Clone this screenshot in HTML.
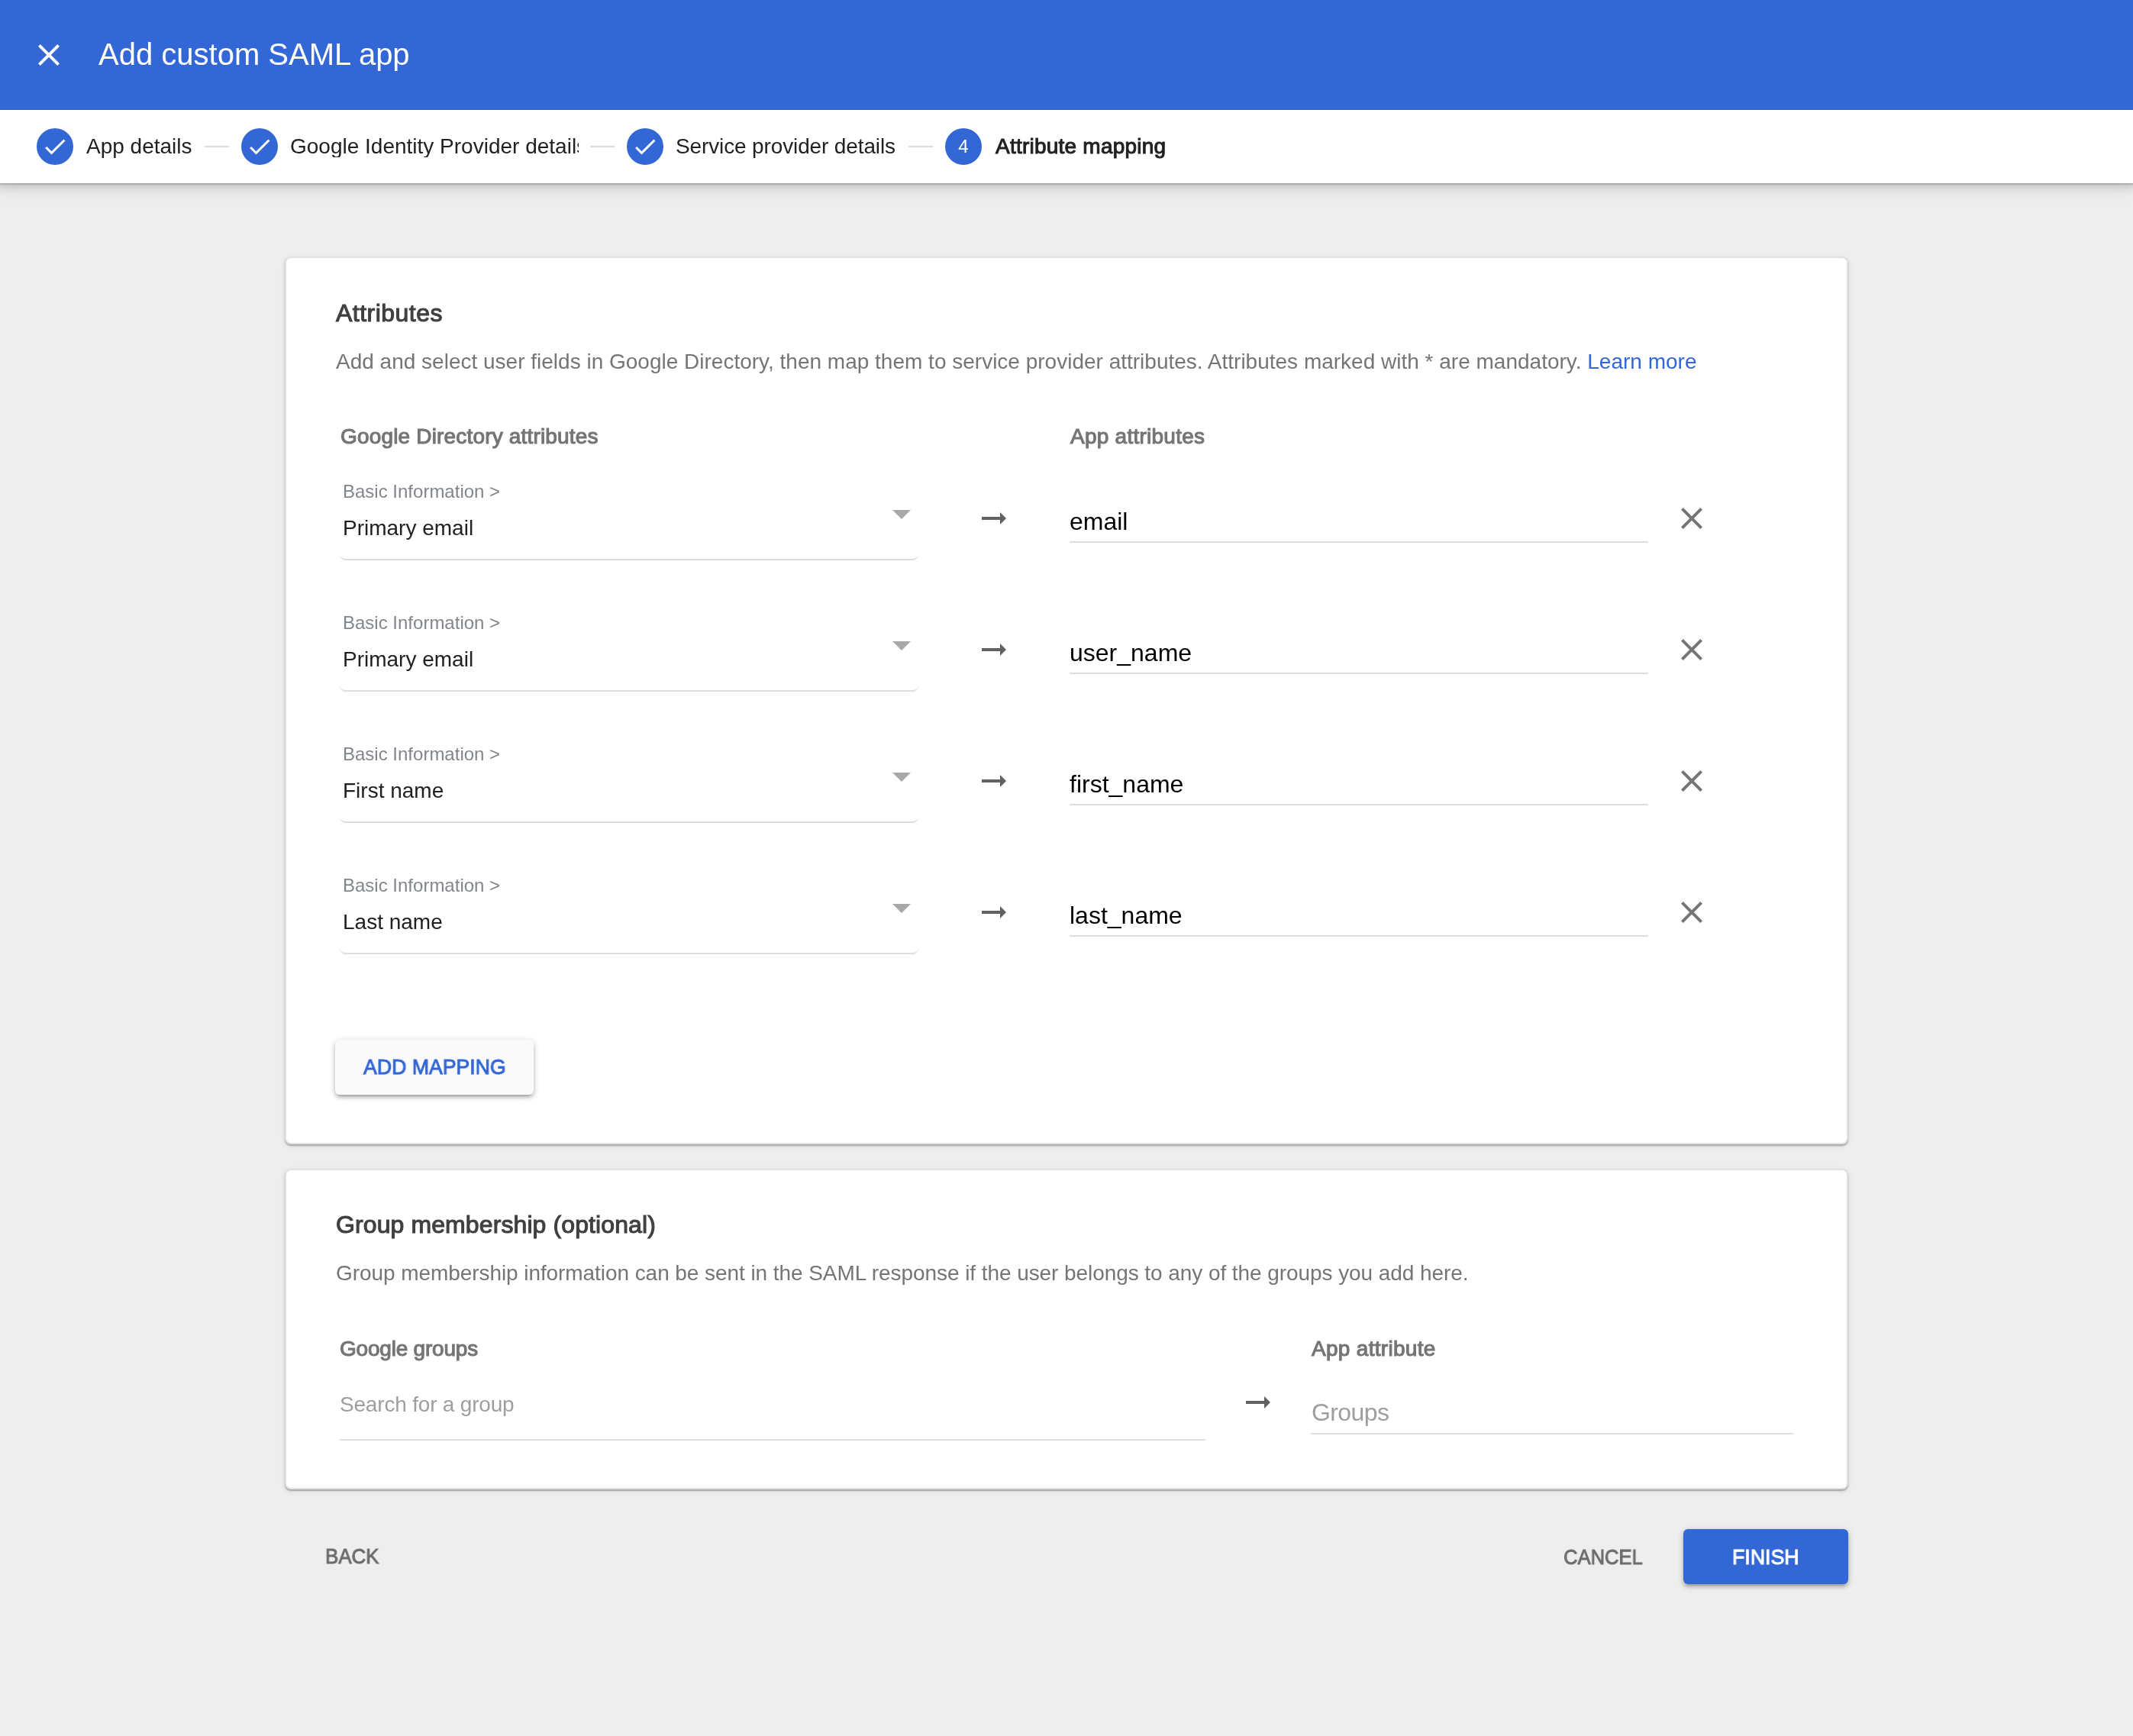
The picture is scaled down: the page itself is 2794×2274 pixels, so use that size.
<!DOCTYPE html>
<html><head><meta charset="utf-8">
<style>
html,body{margin:0;padding:0;}
body{width:2794px;height:2274px;background:#eeeeee;position:relative;overflow:hidden;font-family:"Liberation Sans",sans-serif;}
.a{position:absolute;}
.t{position:absolute;white-space:nowrap;line-height:1;will-change:transform;}
#hdr{left:0;top:0;width:2794px;height:144px;background:#3367d6;z-index:2;box-shadow:inset 0 -1px 0 #2a61d5;}
#stp{left:-6px;top:144px;width:2806px;height:96px;background:#fff;box-shadow:0 1px 3px rgba(0,0,0,.27),0 4px 12px rgba(0,0,0,.15),0 8px 24px rgba(0,0,0,.07);}
.circ{position:absolute;top:168px;width:48px;height:48px;border-radius:50%;background:#3367d6;}
.circ svg{position:absolute;left:6px;top:6px;width:36px;height:36px;}
.conn{position:absolute;top:191px;height:2px;width:32px;background:#dadce0;}
.st{font-size:28px;color:#202124;}
.card{position:absolute;left:373px;width:2044px;border:2px solid #dfe1e5;border-radius:8px;background:#fff;box-shadow:0 2px 2px rgba(0,0,0,.28),0 2px 8px rgba(0,0,0,.08);}
.h2{font-size:32px;font-weight:400;-webkit-text-stroke:1.1px currentColor;color:#404040;}
.desc{font-size:28px;color:#757575;}
.colh{font-size:28px;font-weight:400;-webkit-text-stroke:1.1px currentColor;color:#757575;}
.bi{font-size:24px;color:#80868b;}
.val{font-size:28px;color:#202124;}
.inp{font-size:32px;color:#000;}
.ddl{position:absolute;left:445px;width:758px;height:8px;border-bottom:2px solid #dedede;border-radius:0 0 8px 8px;}
.inl{position:absolute;left:1401px;width:758px;height:2px;background:#dedede;}
.tri{position:absolute;left:1169px;width:0;height:0;border-left:12px solid transparent;border-right:12px solid transparent;border-top:12px solid #a8a8a8;}
.arr{position:absolute;width:32px;height:16px;}
.xic{position:absolute;width:48px;height:48px;}
.btnt{font-size:28px;font-weight:400;-webkit-text-stroke:1px currentColor;}
</style></head>
<body>
<div id="hdr" class="a">
  <svg class="a" style="left:40px;top:48px;width:48px;height:48px" viewBox="0 0 24 24"><path fill="#fff" d="M19 6.41L17.59 5 12 10.59 6.41 5 5 6.41 10.59 12 5 17.59 6.41 19 12 13.41 17.59 19 19 17.59 13.41 12z"/></svg>
  <div class="t" id="title" style="left:129px;top:51px;font-size:40px;color:#fff">Add custom SAML app</div>
</div>
<div id="stp" class="a"></div>
<div class="circ" style="left:48px"><svg viewBox="0 0 24 24"><path fill="#fff" d="M9 16.17L4.83 12l-1.42 1.41L9 19 21 7l-1.41-1.41z"/></svg></div>
<div class="t st" id="s1" style="left:113px;top:178px">App details</div>
<div class="conn" style="left:268px"></div>
<div class="circ" style="left:316px"><svg viewBox="0 0 24 24"><path fill="#fff" d="M9 16.17L4.83 12l-1.42 1.41L9 19 21 7l-1.41-1.41z"/></svg></div>
<div class="t st" id="s2" style="left:380px;top:178px;width:378px;overflow:hidden">Google Identity Provider details</div>
<div class="conn" style="left:773px"></div>
<div class="circ" style="left:821px"><svg viewBox="0 0 24 24"><path fill="#fff" d="M9 16.17L4.83 12l-1.42 1.41L9 19 21 7l-1.41-1.41z"/></svg></div>
<div class="t st" id="s3" style="left:885px;top:178px;letter-spacing:-0.13px">Service provider details</div>
<div class="conn" style="left:1190px"></div>
<div class="circ" style="left:1238px"><div class="t" id="s4" style="left:0;width:48px;text-align:center;top:12px;font-size:24px;color:#fff">4</div></div>
<div class="t st" id="s5" style="left:1304px;top:178px;-webkit-text-stroke:1px currentColor;letter-spacing:0.23px">Attribute mapping</div>

<div class="card" style="top:336px;height:1159px"></div>
<div class="t h2" id="c1h" style="left:440px;top:394px;letter-spacing:0.48px">Attributes</div>
<div class="t desc" id="c1d" style="left:440px;top:460px">Add and select user fields in Google Directory, then map them to service provider attributes. Attributes marked with * are mandatory. <span style="color:#3367d6">Learn more</span></div>
<div class="t colh" id="gda" style="left:446px;top:558px;letter-spacing:0.17px">Google Directory attributes</div>
<div class="t colh" id="apa" style="left:1402px;top:558px;letter-spacing:0.25px">App attributes</div>
<div class="t bi" id="bi0" style="left:449px;top:632px">Basic Information &gt;</div>
<div class="t val" id="v0" style="left:449px;top:678px">Primary email</div>
<div class="ddl" style="top:724px"></div>
<div class="tri" style="top:668px"></div>
<svg class="arr" style="left:1286px;top:671px" viewBox="0 0 32 16"><rect x="0" y="6" width="25" height="4" fill="#616161"/><path d="M24 0L32 8 24 16z" fill="#616161"/></svg>
<div class="t inp" id="in0" style="left:1401px;top:667px">email</div>
<div class="inl" style="top:709px"></div>
<svg class="xic" style="left:2191.5px;top:655px" viewBox="0 0 24 24"><path fill="#757575" d="M19 6.41L17.59 5 12 10.59 6.41 5 5 6.41 10.59 12 5 17.59 6.41 19 12 13.41 17.59 19 19 17.59 13.41 12z"/></svg>
<div class="t bi" id="bi1" style="left:449px;top:804px">Basic Information &gt;</div>
<div class="t val" id="v1" style="left:449px;top:850px">Primary email</div>
<div class="ddl" style="top:896px"></div>
<div class="tri" style="top:840px"></div>
<svg class="arr" style="left:1286px;top:843px" viewBox="0 0 32 16"><rect x="0" y="6" width="25" height="4" fill="#616161"/><path d="M24 0L32 8 24 16z" fill="#616161"/></svg>
<div class="t inp" id="in1" style="left:1401px;top:839px">user_name</div>
<div class="inl" style="top:881px"></div>
<svg class="xic" style="left:2191.5px;top:827px" viewBox="0 0 24 24"><path fill="#757575" d="M19 6.41L17.59 5 12 10.59 6.41 5 5 6.41 10.59 12 5 17.59 6.41 19 12 13.41 17.59 19 19 17.59 13.41 12z"/></svg>
<div class="t bi" id="bi2" style="left:449px;top:976px">Basic Information &gt;</div>
<div class="t val" id="v2" style="left:449px;top:1022px">First name</div>
<div class="ddl" style="top:1068px"></div>
<div class="tri" style="top:1012px"></div>
<svg class="arr" style="left:1286px;top:1015px" viewBox="0 0 32 16"><rect x="0" y="6" width="25" height="4" fill="#616161"/><path d="M24 0L32 8 24 16z" fill="#616161"/></svg>
<div class="t inp" id="in2" style="left:1401px;top:1011px">first_name</div>
<div class="inl" style="top:1053px"></div>
<svg class="xic" style="left:2191.5px;top:999px" viewBox="0 0 24 24"><path fill="#757575" d="M19 6.41L17.59 5 12 10.59 6.41 5 5 6.41 10.59 12 5 17.59 6.41 19 12 13.41 17.59 19 19 17.59 13.41 12z"/></svg>
<div class="t bi" id="bi3" style="left:449px;top:1148px">Basic Information &gt;</div>
<div class="t val" id="v3" style="left:449px;top:1194px">Last name</div>
<div class="ddl" style="top:1240px"></div>
<div class="tri" style="top:1184px"></div>
<svg class="arr" style="left:1286px;top:1187px" viewBox="0 0 32 16"><rect x="0" y="6" width="25" height="4" fill="#616161"/><path d="M24 0L32 8 24 16z" fill="#616161"/></svg>
<div class="t inp" id="in3" style="left:1401px;top:1183px">last_name</div>
<div class="inl" style="top:1225px"></div>
<svg class="xic" style="left:2191.5px;top:1171px" viewBox="0 0 24 24"><path fill="#757575" d="M19 6.41L17.59 5 12 10.59 6.41 5 5 6.41 10.59 12 5 17.59 6.41 19 12 13.41 17.59 19 19 17.59 13.41 12z"/></svg>

<div class="a" id="addbtn" style="left:439px;top:1362px;width:260px;height:72px;background:#fafafa;border-radius:6px;box-shadow:0 4px 4px 0 rgba(0,0,0,.14),0 6px 2px -4px rgba(0,0,0,.12),0 2px 10px 0 rgba(0,0,0,.2)"></div>
<div class="t btnt" id="addt" style="left:476px;top:1384px;color:#3367d6;transform:scaleX(0.952);transform-origin:0 0">ADD MAPPING</div>

<div class="card" style="top:1531px;height:416px"></div>
<div class="t h2" id="c2h" style="left:440px;top:1588px;letter-spacing:0.1px">Group membership (optional)</div>
<div class="t desc" id="c2d" style="left:439.5px;top:1654px;letter-spacing:-0.07px">Group membership information can be sent in the SAML response if the user belongs to any of the groups you add here.</div>
<div class="t colh" id="ggr" style="left:445px;top:1753px;letter-spacing:-0.21px">Google groups</div>
<div class="t colh" id="apb" style="left:1718px;top:1753px;letter-spacing:0.3px">App attribute</div>
<div class="t" id="srch" style="left:445px;top:1826px;font-size:28px;color:#9e9e9e;letter-spacing:-0.19px">Search for a group</div>
<div class="a" style="left:445px;top:1885px;width:1134px;height:2px;background:#dedede"></div>
<svg class="arr" style="left:1632px;top:1829px" viewBox="0 0 32 16"><rect x="0" y="6" width="25" height="4" fill="#616161"/><path d="M24 0L32 8 24 16z" fill="#616161"/></svg>
<div class="t" id="grps" style="left:1717.5px;top:1834px;font-size:32px;color:#9e9e9e;letter-spacing:-0.6px">Groups</div>
<div class="a" style="left:1717px;top:1877px;width:632px;height:2px;background:#dedede"></div>

<div class="t btnt" id="back" style="left:425.7px;top:2025px;color:#6d6d6d;transform:scaleX(0.925);transform-origin:0 0">BACK</div>
<div class="t btnt" id="cancel" style="left:2048px;top:2025.5px;color:#6d6d6d;transform:scaleX(0.914);transform-origin:0 0">CANCEL</div>
<div class="a" style="left:2205px;top:2003px;width:216px;height:72px;background:#3367d6;border-radius:6px;box-shadow:0 4px 4px 0 rgba(0,0,0,.14),0 6px 2px -4px rgba(0,0,0,.12),0 2px 10px 0 rgba(0,0,0,.2)"></div>
<div class="t btnt" id="finish" style="left:2268.9px;top:2025.5px;color:#fff;transform:scaleX(0.954);transform-origin:0 0">FINISH</div>
</body></html>
